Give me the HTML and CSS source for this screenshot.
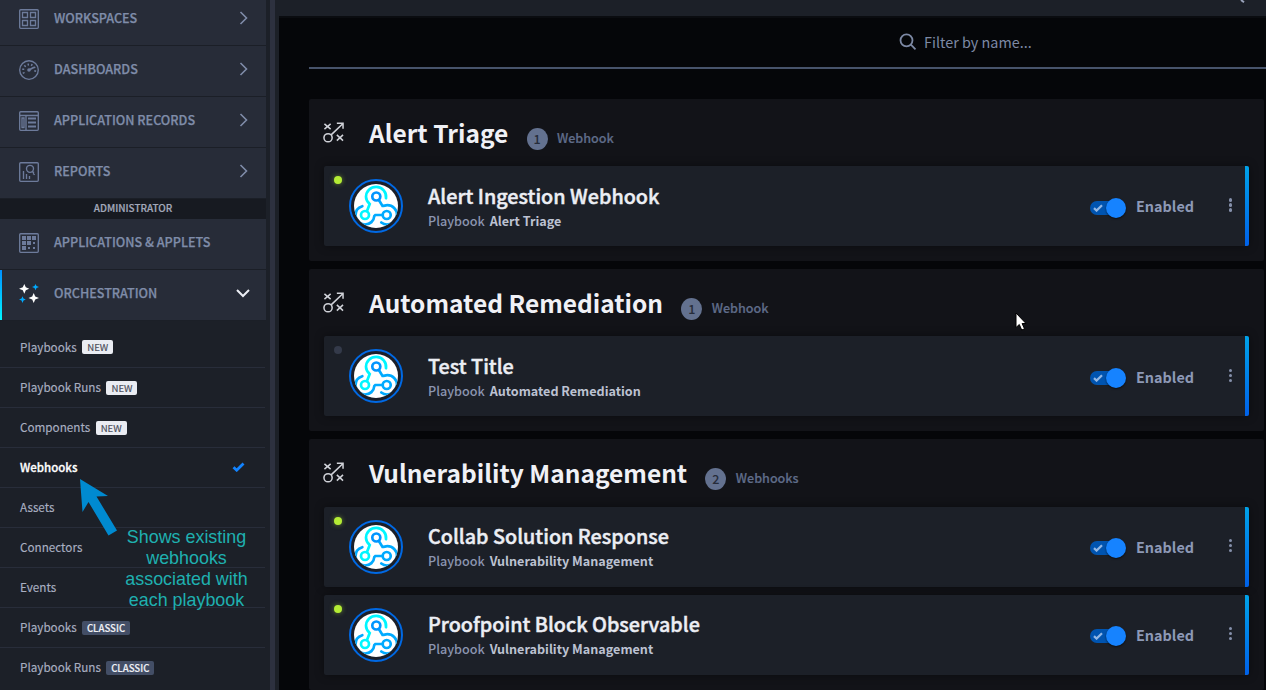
FILE: index.html
```html
<!DOCTYPE html>
<html lang="en">
<head>
<meta charset="utf-8">
<title>Webhooks</title>
<link rel="stylesheet" href="styles.css">
</head>
<body>
<svg class="defs" width="0" height="0">
  <defs>
    <clipPath id="disc"><circle cx="27" cy="27" r="22"/></clipPath>
  </defs>
  <symbol id="chev" viewBox="0 0 10 14"><path d="M1.500 1l6 6-6 6" fill="none" stroke="currentColor" stroke-width="1.600"/></symbol>
  <symbol id="play" viewBox="0 0 22 22">
    <g fill="none" stroke="#d0d2d8" stroke-width="1.600"><path d="M1.500 2l6.500 5.500M8 2l-6.500 5.500M14.500 13.500l6.500 6M21 13.500l-6.500 6M8.500 13.500L21 1.500M14.500 1.200H21V7"/><circle cx="5.300" cy="16.500" r="4.300"/></g>
  </symbol>
  <symbol id="hook" viewBox="0 0 54 54">
    <circle cx="27" cy="27" r="26" fill="#1b1f29" stroke="#0069e4" stroke-width="2"/>
    <circle cx="27" cy="27" r="22" fill="#fff"/>
    <g clip-path="url(#disc)" fill="none" stroke-width="2.700" stroke-linecap="round">
      <path stroke="#0af" d="M13.300 27.200C9 28.500 6.500 32 6.500 36.200c0 5.300 4.200 9.300 9.500 9.300 5 0 9-3.500 9.300-8.500l1-1h7.200M32.300 43.500c1.700 1.300 3.400 2 5.700 2 5.500 0 10-4.300 10-9.700 0-5.400-4.300-9.600-9.700-9.600-1.700 0-3.200.8-4.800.8L30 21.300"/>
      <circle stroke="#0095ff" cx="27.300" cy="17.500" r="4"/><circle stroke="#0af" cx="37.700" cy="36" r="4"/>
      <path stroke="#00f6ff" d="M37 19.200c.8-5.800-3.700-11.300-9.700-11.300-5.700 0-10.300 4.300-10.300 9.900 0 3.500 1.600 5.400 3.700 7.300L18 32"/>
      <circle stroke="#00f6ff" cx="16" cy="36" r="4"/>
    </g>
  </symbol>
  <symbol id="check" viewBox="0 0 12 10"><path d="M1 5.200l3.200 3L11 1.500" fill="none" stroke="currentColor" stroke-width="2.800"/></symbol>
</svg>

<div class="app">
  <aside class="sidebar">
    <nav>
      <div class="item"><svg class="ico" viewBox="0 0 20 20"><rect x=".7" y=".7" width="18.600" height="18.600" rx="1"/><path d="M3.500 3.500h5v5h-5zM11.500 3.500h5v5h-5zM3.500 11.500h5v5h-5zM11.500 11.500h5v5h-5z"/></svg><span>WORKSPACES</span><svg class="chev"><use href="#chev"/></svg></div>
      <div class="item"><svg class="ico" viewBox="0 0 20 20"><circle cx="10" cy="10" r="9.300"/><path stroke-width="1.600" d="M10 10l5-2.700"/><circle class="solid" cx="10" cy="10" r="1.800"/><path stroke-dasharray="1.500 2.100" stroke-width="2" d="M5 13.500a6 6 0 1 1 10.500-.3"/></svg><span>DASHBOARDS</span><svg class="chev"><use href="#chev"/></svg></div>
      <div class="item"><svg class="ico" viewBox="0 0 20 20"><rect x=".7" y=".7" width="18.600" height="18.600" rx="1"/><path d="M1 4.500h18M7 5v14M3 7h2v9.500H3z"/><path stroke-width="2" d="M9 7.500h8M9 11.500h8M9 15.500h8"/></svg><span>APPLICATION RECORDS</span><svg class="chev"><use href="#chev"/></svg></div>
      <div class="item"><svg class="ico" viewBox="0 0 20 20"><rect x=".7" y=".7" width="18.600" height="18.600" rx="1"/><circle cx="11" cy="6.800" r="3.500"/><path d="M13.500 9.500l2 3.500M4.500 9v8M7.500 12v5M10.500 14v3M14.500 9.500v3"/></svg><span>REPORTS</span><svg class="chev"><use href="#chev"/></svg></div>
      <div class="divider">ADMINISTRATOR</div>
      <div class="item"><svg class="ico" viewBox="0 0 20 20"><rect x=".7" y=".7" width="18.600" height="18.600" rx="1"/><path class="solid" d="M3 3h4v4H3zM8 3h4v4H8zM13 3h4v4h-4zM3 8h4v4H3zM8 8h4v4H8zM14 9h2v2h-2zM3 13h4v4H3zM9 14h2v2H9zM14 14h2v2h-2z"/></svg><span>APPLICATIONS &amp; APPLETS</span></div>
      <div class="item open"><svg class="ico stars" viewBox="0 0 20 20"><path fill="#fff" d="M5.300 0l1.500 3.300 3.400 1.500-3.400 1.500-1.500 3.400-1.500-3.400L0 4.800l3.800-1.500zM14.700 9l1.500 3.400 3.800 1.500-3.800 1.500-1.500 3.500-1.500-3.500-3.700-1.500 3.700-1.500z"/><path fill="#0af" d="M16.500 0l1 2 2.500 1-2.500 1-1 2.200-1-2.200L13 3l2.500-1zM3.500 12.300l1 2.200 2.300 1-2.300 1-1 2.500-1-2.500-2.500-1 2.500-1z"/></svg><span>ORCHESTRATION</span><svg class="down" viewBox="0 0 14 9"><path d="M1 1l6 6 6-6" fill="none" stroke="#eceef5" stroke-width="2"/></svg></div>
    </nav>
    <ul class="sub">
      <li class="first">Playbooks<b class="tag new">NEW</b></li>
      <li>Playbook Runs<b class="tag new">NEW</b></li>
      <li>Components<b class="tag new">NEW</b></li>
      <li class="current">Webhooks<svg class="tick"><use href="#check"/></svg></li>
      <li>Assets</li>
      <li>Connectors</li>
      <li>Events</li>
      <li>Playbooks<b class="tag classic">CLASSIC</b></li>
      <li class="last">Playbook Runs<b class="tag classic">CLASSIC</b></li>
    </ul>
  </aside>
  <div class="scroll"></div>
  <main>
    <header class="topbar"><svg class="top-glass" viewBox="0 0 6 4"><path d="M1 0l3 2.300" stroke="#9aa3bb" stroke-width="2"/></svg></header>
    <div class="content">
      <div class="filter"><svg viewBox="0 0 18 18"><circle cx="7.500" cy="7.300" r="6" /><path d="M11.900 11.700l4.600 4.600"/></svg><span>Filter by name...</span></div>

      <section class="panel">
        <div class="head"><svg class="play"><use href="#play"/></svg><h2>Alert Triage</h2><i class="count">1</i><span class="unit">Webhook</span></div>
        <article class="card"><i class="dot on"></i><svg class="hook"><use href="#hook"/></svg><div class="info"><h3>Alert Ingestion Webhook</h3><p>Playbook<strong>Alert Triage</strong></p></div><div class="switch"><svg><use href="#check"/></svg><i></i></div><span class="state">Enabled</span><div class="more"><i></i><i></i><i></i></div></article>
      </section>

      <section class="panel">
        <div class="head"><svg class="play"><use href="#play"/></svg><h2>Automated Remediation</h2><i class="count">1</i><span class="unit">Webhook</span></div>
        <article class="card"><i class="dot"></i><svg class="hook"><use href="#hook"/></svg><div class="info"><h3>Test Title</h3><p>Playbook<strong>Automated Remediation</strong></p></div><div class="switch"><svg><use href="#check"/></svg><i></i></div><span class="state">Enabled</span><div class="more"><i></i><i></i><i></i></div></article>
      </section>

      <section class="panel">
        <div class="head"><svg class="play"><use href="#play"/></svg><h2>Vulnerability Management</h2><i class="count">2</i><span class="unit">Webhooks</span></div>
        <article class="card"><i class="dot on"></i><svg class="hook"><use href="#hook"/></svg><div class="info"><h3>Collab Solution Response</h3><p>Playbook<strong>Vulnerability Management</strong></p></div><div class="switch"><svg><use href="#check"/></svg><i></i></div><span class="state">Enabled</span><div class="more"><i></i><i></i><i></i></div></article>
        <article class="card"><i class="dot on"></i><svg class="hook"><use href="#hook"/></svg><div class="info"><h3>Proofpoint Block Observable</h3><p>Playbook<strong>Vulnerability Management</strong></p></div><div class="switch"><svg><use href="#check"/></svg><i></i></div><span class="state">Enabled</span><div class="more"><i></i><i></i><i></i></div></article>
      </section>
    </div>
  </main>
</div>

<svg class="arrow" viewBox="0 0 40 60"><path fill="#008ad0" d="M1 0l28 17-11.500.5L38 51.500l-8.500 5L9.500 23 3.500 33z"/></svg>
<div class="note">Shows existing<br>webhooks<br>associated with<br>each playbook</div>
<svg class="cursor" viewBox="0 0 12 19"><path d="M1 1v14.500l3.300-3L6.700 18l2.800-1.200-2.400-5.300H11z" fill="#fff" stroke="#000" stroke-width="1"/></svg>
</body>
</html>
```
FILE: styles.css
```css
* { box-sizing: border-box; }
body { margin: 0; background: #050609; font-family: "Noto Sans CJK JP", "Noto Sans", sans-serif; overflow: hidden; }
.defs { position: absolute; }
h2, h3, p, ul { margin: 0; padding: 0; }
i { font-style: normal; }
svg { display: block; flex: none; }
.app { display: flex; height: 690px; overflow: hidden; }

.sidebar { width: 270px; flex: none; background: #1c2028; padding-right: 4px; }
nav { margin-top: -5px; }
.item { display: flex; align-items: center; height: 51px; padding: 0 17.500px 4px 19px; background: #272c38; border-bottom: 1px solid #1b1f27; color: #7f8ca9; font-size: 12.600px; font-weight: 500; line-height: 20px; -webkit-text-stroke: .25px; }
.ico { width: 20px; height: 20px; margin: 1px 15px 0 0; fill: none; stroke: #6d7b9b; stroke-width: 1.350; }
.ico .solid { fill: #6d7b9b; stroke: none; }
.item span { flex: 1; }
.chev { width: 10px; height: 14px; }
.divider { height: 20px; background: #171a21; color: #a2a8ba; font-size: 9.950px; font-weight: 500; line-height: 18px; text-align: center; -webkit-text-stroke: .2px; }
.open { position: relative; }
.open::before { content: ""; position: absolute; left: 0; top: 0; width: 2px; height: 50px; background: linear-gradient(#0090ff, #00f6ff); }
.ico.stars { stroke: none; }
.down { width: 14px; height: 9px; margin-right: -1.500px; }

.sub { list-style: none; }
.sub li { display: flex; align-items: center; height: 40px; width: 265px; padding: 0 20px 2px 20px; border-bottom: 1px solid #282d3a; color: #a9afc1; font-size: 11.700px; line-height: 20px; -webkit-text-stroke: .15px; }
.sub .first { height: 47px; padding-top: 5px; padding-bottom: 0; }
.sub .last { border: 0; }
.sub .current { color: #fff; font-weight: 500; justify-content: space-between; font-size: 11.500px; -webkit-text-stroke: .3px; }
.tick { width: 13px; height: 10px; color: #1283ff; }
.tag { height: 14px; margin: 2px 0 0 5.500px; padding: 0 4.700px; border-radius: 2px; font-size: 9.600px; line-height: 14px; }
.first .tag { margin-top: 0; }
.new { padding: 0 5px; background: #eaecf2; color: #4a4e5a; font-weight: 400; }
.classic { background: #434e66; color: #eef0f5; font-weight: 500; }

.scroll { width: 5px; flex: none; background: #2d313f; }
main { flex: 1; padding-left: 4px; background: #1c2027; }
.topbar { height: 16px; margin-left: -4px; padding-left: 965px; background: #1c2028; }
.top-glass { width: 6px; height: 4px; }
.content { height: 674px; background: #050609; border-top: 2px solid #0a0c10; padding-left: 30px; }
.filter { display: flex; align-items: center; height: 51px; border-bottom: 2px solid #47536b; padding: 0 0 2px 590px; margin-bottom: 30px; color: #7d89a5; font-size: 14.400px; line-height: 20px; }
.filter svg { width: 18px; height: 18px; margin-right: 7px; fill: none; stroke: #7d89a5; stroke-width: 1.800; }

.panel { width: 955px; margin-bottom: 8px; padding: 0 15px 15px; background: #121318; border-radius: 2px; }
.head { display: flex; align-items: center; height: 67.200px; }
.play { width: 21px; height: 21px; margin-left: -1px; }
h2 { margin: 0 18.300px 0 25px; color: #f0f1f6; font-size: 24.500px; font-weight: 700; line-height: 36px; }
.count { width: 21px; height: 22px; margin-top: 12px; border-radius: 50%; background: #63718f; color: #262c3a; font-size: 12.600px; font-weight: 500; line-height: 21px; text-align: center; }
.unit { margin: 11px 0 0 9.300px; color: #5f6c89; font-size: 12.600px; font-weight: 500; line-height: 20px; -webkit-text-stroke: .2px; }

.card { position: relative; display: flex; align-items: center; height: 80px; padding: 0 16.500px 0 25px; background: #1c2028; border-radius: 2px; box-shadow: 0 0 10px rgba(0,0,0,.4); }
.card + .card { margin-top: 8px; }
.card::after { content: ""; position: absolute; right: 0; top: 0; width: 4px; height: 100%; background: linear-gradient(#00a2e8, #0061e8); border-radius: 0 2px 2px 0; }
.dot { position: absolute; left: 10px; top: 10px; width: 8px; height: 8px; border-radius: 50%; background: #343a4a; }
.on { background: #b4ec35; box-shadow: 0 0 5px rgba(180,236,53,.5); }
.hook { width: 54px; height: 54px; }
.info { flex: 1; margin-left: 25px; }
h3 { color: #eceef4; font-size: 19.800px; font-weight: 500; line-height: 28px; -webkit-text-stroke: .45px; }
.info p { margin-top: .65px; color: #8b95b0; font-size: 12.600px; font-weight: 500; line-height: 20px; }
.info strong { margin-left: 5px; color: #bcc2d2; font-weight: 700; }
.switch { position: relative; width: 36px; height: 14px; margin-top: 3.600px; border-radius: 7px; background: linear-gradient(90deg, #0054b0, #0054b0 70%, transparent 70%); }
.switch svg { width: 10px; height: 8px; margin: 3px 0 0 3px; color: #91b7e5; }
.switch i { position: absolute; right: 0; top: -3px; width: 20px; height: 20px; border-radius: 50%; background: #1683ff; box-shadow: 0 1px 2px rgba(0,0,0,.6); }
.state { width: 92.500px; margin: .4px 0 0 10px; color: #8d99b6; font-size: 14.400px; font-weight: 700; line-height: 20px; }
.more { display: flex; flex-direction: column; gap: 1.500px; width: 4px; margin-top: -2px; }
.more i { width: 3.500px; height: 3.500px; border-radius: 50%; background: #8590ab; }

.arrow { position: absolute; left: 79px; top: 479px; width: 40px; height: 60px; }
.note { position: absolute; left: 116px; top: 527px; width: 141px; color: #1fb0b0; font: 17.900px/21px "Liberation Sans", Arial, sans-serif; text-align: center; }
.cursor { position: absolute; left: 1015px; top: 312px; width: 12px; height: 19px; }
```
